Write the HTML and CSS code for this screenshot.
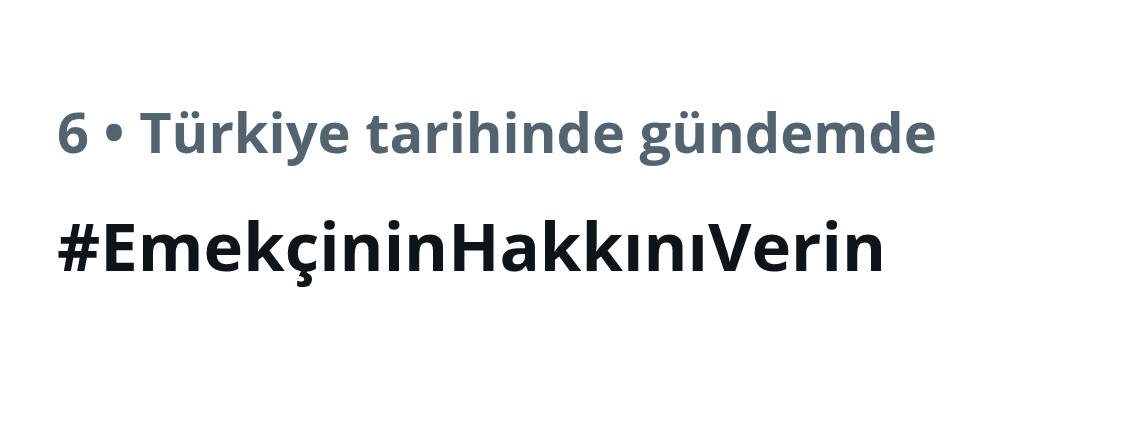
FILE: index.html
```html
<!DOCTYPE html>
<html lang="tr">
    <head>
        <meta charset="utf-8">
        <meta name="viewport" content="width=device-width, initial-scale=1.0">
        <title>Gündemdekiler</title>
        <link rel="stylesheet" href="styles.css">
    </head>
    <body>
        <div class="trend">
            <div class="info">6 • Türkiye tarihinde gündemde</div>
            <div class="tag">#EmekçininHakkınıVerin</div>
        </div>
    </body>
</html>
```
FILE: styles.css
```css
html, body{
    margin: 0px;
    padding: 0px;
    background-color: white;
    font-family: "Open Sans", "Noto Sans", sans-serif;
    font-weight: 700;
}
.trend{
    padding: 91px 57px;
}
.info{
    color: #536471;
    font-size: 56px;
    line-height: 80px;
}
.tag{
    margin-top: 26px;
    color: #0f1419;
    font-size: 67px;
    line-height: 96px;
}
```
